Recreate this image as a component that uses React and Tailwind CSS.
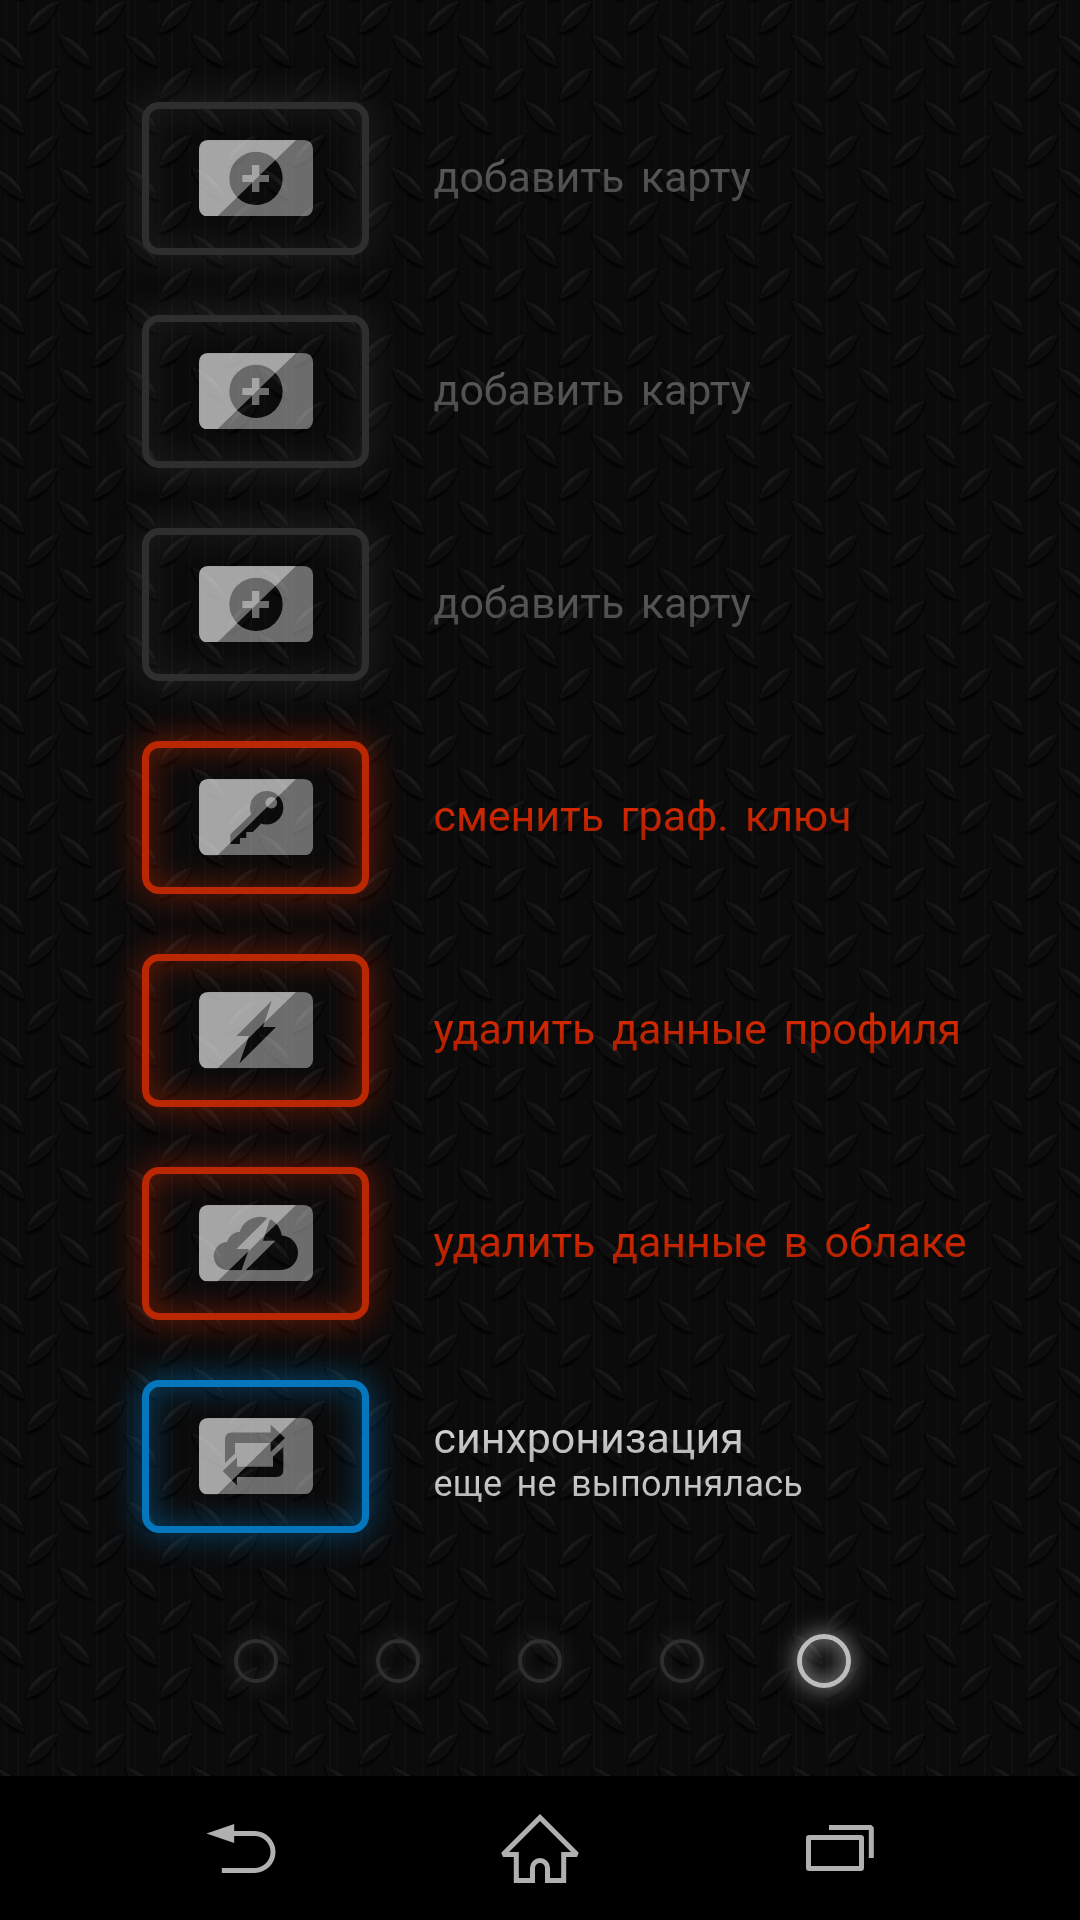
import React from "react";

const sym = {
  plus: (
    <>
      <circle cx="408" cy="292" r="80" fill="black" />
      <path d="M396 252h22v30h29v21h-29v30h-22v-30h-29v-21h29z" fill="white" />
    </>
  ),
  key: (
    <>
      <path d="M394 282L331 343V372H360V354H379V336H398L423 311Z" fill="black" />
      <circle cx="440" cy="263" r="50" fill="black" />
      <circle cx="454" cy="248" r="17.5" fill="white" />
    </>
  ),
  bolt: <path d="M455 203L349 309H387L358 391L468 282H429Z" fill="black" />,
  cloud: (
    <>
      <g fill="black">
        <circle cx="323" cy="330" r="42" />
        <circle cx="362" cy="299" r="42" />
        <circle cx="421" cy="277" r="65" />
        <circle cx="482" cy="320" r="52" />
        <rect x="323" y="290" width="159" height="82" />
      </g>
      <path d="M455 204L349 309H387L358 391L466 284H429Z" fill="white" />
    </>
  ),
  sync: (
    <path
      d="M315 312V242Q315 220 337 220H452V197L495 237L452 279V252H345V283ZM490 263V332Q490 354 468 354H351V379L308 336L351 295V323H459V293Z"
      fill="black"
    />
  ),
};

function CardIcon({ kind, id }) {
  return (
    <svg viewBox="237 177 342 229" className="h-[76.5px] w-[114px]">
      <defs>
        <mask id={"cut" + id} maskUnits="userSpaceOnUse" x="237" y="177" width="342" height="229">
          <rect x="237" y="177" width="342" height="229" rx="26" fill="white" />
          {sym[kind]}
        </mask>
        <clipPath id={"clip" + id}>
          <rect x="237" y="177" width="342" height="229" rx="26" />
        </clipPath>
      </defs>
      <rect x="237" y="177" width="342" height="229" fill="white" fillOpacity=".4" mask={`url(#cut${id})`} />
      <path d="M237 177H528L292 406H237Z" fill="white" fillOpacity=".39" clipPath={`url(#clip${id})`} />
    </svg>
  );
}

const frames = {
  gray: "border-[#2e2e2e] shadow-[0_0_38px_2px_rgba(80,80,80,0.3),inset_0_0_34px_2px_rgba(80,80,80,0.22)]",
  red: "border-[#b92703] shadow-[0_0_32px_3px_rgba(190,40,0,0.46),inset_0_0_30px_3px_rgba(190,40,0,0.42)]",
  blue: "border-[#0576bb] shadow-[0_0_32px_3px_rgba(0,112,180,0.5),inset_0_0_30px_3px_rgba(0,112,180,0.45)]",
};

const rows = [
  { kind: "plus", tone: "gray", text: "добавить карту" },
  { kind: "plus", tone: "gray", text: "добавить карту" },
  { kind: "plus", tone: "gray", text: "добавить карту" },
  { kind: "key", tone: "red", text: "сменить граф. ключ" },
  { kind: "bolt", tone: "red", text: "удалить данные профиля" },
  { kind: "cloud", tone: "red", text: "удалить данные в облаке" },
  { kind: "sync", tone: "blue", text: "синхронизация", sub: "еще не выполнялась" },
];

const tones = {
  gray: "from-[#5e5e5e] to-[#4a4a4a]",
  red: "from-[#ec2e02] to-[#a81e00]",
  blue: "from-[#e6e6e6] to-[#b0b0b0]",
};

// Vertical brushed-metal streaks: [x, opacity]
const brush = [
  [5, 0.012], [17, 0.02], [31, 0.01], [52, 0.018], [58, 0.012], [79, 0.015], [96, 0.02], [103, 0.01], [127, 0.018], [134, 0.012],
  [158, 0.012], [171, 0.02], [189, 0.01], [204, 0.018], [222, 0.012],
];

function Tread({ mirrored }) {
  return (
    <g transform={mirrored ? "translate(117 33.3) scale(-1 1)" : undefined}>
      <path d="M25 34.5Q38 35 48 22Q56 13 59 2Q50 22 41 27Q35 31 25 34.5Z" fill="#010101" stroke="#010101" strokeWidth="0.8" filter="url(#soft)" />
      <path d="M26 33Q31 9 58 1Q53 24 26 33Z" fill="#0f0f0f" filter="url(#soft)" />
      <path d="M28 27Q35 9 58 1.5Q42 11 28 27Z" fill="#1e1e1e" stroke="#1e1e1e" strokeWidth="0.8" filter="url(#soft)" />
    </g>
  );
}

function Plate() {
  return (
    <svg className="absolute inset-0 h-full w-full" aria-hidden="true">
      <defs>
        <filter id="soft" x="-20%" y="-20%" width="140%" height="140%">
          <feGaussianBlur stdDeviation="1" />
        </filter>
        <pattern id="brush" width="233" height="20" patternUnits="userSpaceOnUse">
          {brush.map(([x, o]) => (
            <rect key={x} x={x} width="2" height="20" fill="white" fillOpacity={o} />
          ))}
        </pattern>
        <pattern id="plate" width="66.64" height="66.62" patternUnits="userSpaceOnUse">
          <Tread />
          <g transform="translate(0 66.62)"><Tread /></g>
          <Tread mirrored />
          <g transform="translate(-66.64 0)"><Tread mirrored /></g>
          <g transform="translate(0 -66.62)"><Tread mirrored /></g>
          <g transform="translate(-66.64 -66.62)"><Tread mirrored /></g>
        </pattern>
      </defs>
      <rect width="100%" height="100%" fill="#0b0b0b" />
      <rect width="100%" height="100%" fill="url(#brush)" />
      <rect width="100%" height="100%" fill="url(#plate)" />
    </svg>
  );
}

export default function App() {
  return (
    <div className="flex h-[1920px] w-[1080px] flex-col overflow-hidden bg-black font-['Roboto',sans-serif]">
      <main className="relative h-[1776px] overflow-hidden">
        <Plate />
        <div className="relative flex flex-col gap-[60.1px] pt-[101.5px] pl-[142px]">
          {rows.map((r, i) => (
            <div key={i} className="flex h-[153px] items-center gap-[64.5px]">
              <div className={`flex h-[153px] w-[227px] shrink-0 items-center justify-center rounded-[17px] border-[7px] ${frames[r.tone]}`}>
                <CardIcon kind={r.kind} id={i} />
              </div>
              <div className={r.sub ? "pt-[5px] whitespace-nowrap" : "pb-[2px] whitespace-nowrap"}>
                <div className={`w-fit bg-gradient-to-b bg-clip-text text-[43px] leading-[50px] tracking-[-0.05px] text-transparent [word-spacing:6px] ${tones[r.tone]}`}>
                  {r.text}
                </div>
                {r.sub && (
                  <div className="w-fit bg-gradient-to-b from-[#dddddd] to-[#b0b0b0] bg-clip-text text-[36px] leading-[42px] tracking-[0.22px] text-transparent [word-spacing:5px]">
                    {r.sub}
                  </div>
                )}
              </div>
            </div>
          ))}
        </div>
        <div className="relative mt-[94px] flex h-[68px] items-center justify-between px-[229px]">
          {[0, 1, 2, 3].map((i) => (
            <div key={i} className="flex w-[54px] justify-center">
              <div className="h-[44px] w-[44px] rounded-full border-4 border-[#2e2e2e] shadow-[0_0_24px_2px_rgba(80,80,80,0.3),inset_0_0_16px_rgba(80,80,80,0.28)]" />
            </div>
          ))}
          <div className="h-[54px] w-[54px] rounded-full border-[5px] border-[#bcbcbc] shadow-[0_0_22px_3px_rgba(190,190,190,0.55),inset_0_0_20px_4px_rgba(190,190,190,0.5)]" />
        </div>
      </main>
      <nav className="grid h-[144px] grid-cols-3 items-center justify-items-center bg-black px-[90px]">
        <svg viewBox="200 1776 80 144" className="h-[144px] w-[80px]" fill="none">
          <path d="M206.5 1833.5L234.2 1824V1843Z" fill="#b0b0b0" />
          <path d="M233 1833.5H254.5a18.5 18.5 0 0 1 0 37H221.8" stroke="#b0b0b0" strokeWidth="5" />
        </svg>
        <svg viewBox="500 1776 80 144" className="h-[144px] w-[80px]" fill="none">
          <path
            d="M540 1817.5L503 1854.5H516.3V1880.5H532.5V1868a7.5 7.5 0 0 1 15 0V1880.5H563.7V1854.5H577Z"
            stroke="#b0b0b0"
            strokeWidth="5"
            strokeMiterlimit="2"
          />
        </svg>
        <svg viewBox="800 1776 80 144" className="h-[144px] w-[80px]" fill="none" stroke="#b0b0b0" strokeWidth="5">
          <rect x="808.5" y="1837.5" width="53" height="31" rx=".8" />
          <path d="M829 1827.5H871.3V1858" strokeLinejoin="bevel" />
        </svg>
      </nav>
    </div>
  );
}
